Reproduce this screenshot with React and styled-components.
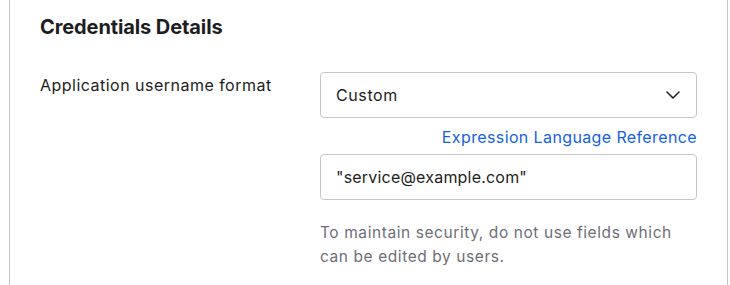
import React from 'react';
import styled, { createGlobalStyle } from 'styled-components';

const GlobalStyle = createGlobalStyle`
	body {
		margin: 0;
		background: #ffffff;
		font-family: Inter, "Noto Sans", sans-serif;
		color: #1d1d21;
	}
`;

const Panel = styled.section`
	margin-left: 9px;
	width: 719px;
	height: 285px;
	box-sizing: border-box;
	border-left: 1px solid #c8c8cc;
	border-right: 1px solid #c8c8cc;
	padding: 13px 30px 0;
`;

const Title = styled.h2`
	margin: 0;
	font-size: 20px;
	line-height: 28px;
	font-weight: 700;
	letter-spacing: -0.1px;
	color: #1d1d21;
`;

const Row = styled.div`
	display: grid;
	grid-template-columns: 280px 377px;
	margin-top: 31px;
`;

const Label = styled.label`
	font-size: 16px;
	line-height: 24px;
	letter-spacing: 0.48px;
	padding-top: 1px;
	color: #1d1d21;
`;

const Field = styled.div`
	display: flex;
	flex-direction: column;
`;

const Box = styled.div`
	display: flex;
	align-items: center;
	justify-content: ${({ $select }) => ($select ? 'space-between' : 'flex-start')};
	height: 46px;
	box-sizing: border-box;
	padding: 0 16px 0 15px;
	border: 1px solid #c5c5cb;
	border-radius: 4px;
	font-size: 16px;
	letter-spacing: ${({ $select }) => ($select ? '0.6px' : '0.2px')};
	color: #1d1d21;
`;

const LinkRow = styled.div`
	display: flex;
	justify-content: flex-end;
	padding: 8px 0 6px;
`;

const Link = styled.a`
	font-size: 16px;
	line-height: 22px;
	letter-spacing: 0.38px;
	color: #1662dd;
	text-decoration: none;
`;

const Hint = styled.p`
	margin: 21px 0 0;
	font-size: 15.5px;
	line-height: 24px;
	letter-spacing: 0.58px;
	color: #6e6e78;
`;

const Chevron = () => (
	<svg width="14" height="8" viewBox="0 0 14 8" fill="none">
		<path d="M1 1l6 6 6-6" stroke="#1d1d21" strokeWidth="1.5" strokeLinecap="round" strokeLinejoin="round" />
	</svg>
);

export default function App() {
	return (
		<>
			<GlobalStyle />
			<Panel>
				<Title>Credentials Details</Title>
				<Row>
					<Label>Application username format</Label>
					<Field>
						<Box $select>
							<span>Custom</span>
							<Chevron />
						</Box>
						<LinkRow>
							<Link href="#">Expression Language Reference</Link>
						</LinkRow>
						<Box>"service@example.com"</Box>
						<Hint>
							To maintain security, do not use fields which
							<br />
							can be edited by users.
						</Hint>
					</Field>
				</Row>
			</Panel>
		</>
	);
}
